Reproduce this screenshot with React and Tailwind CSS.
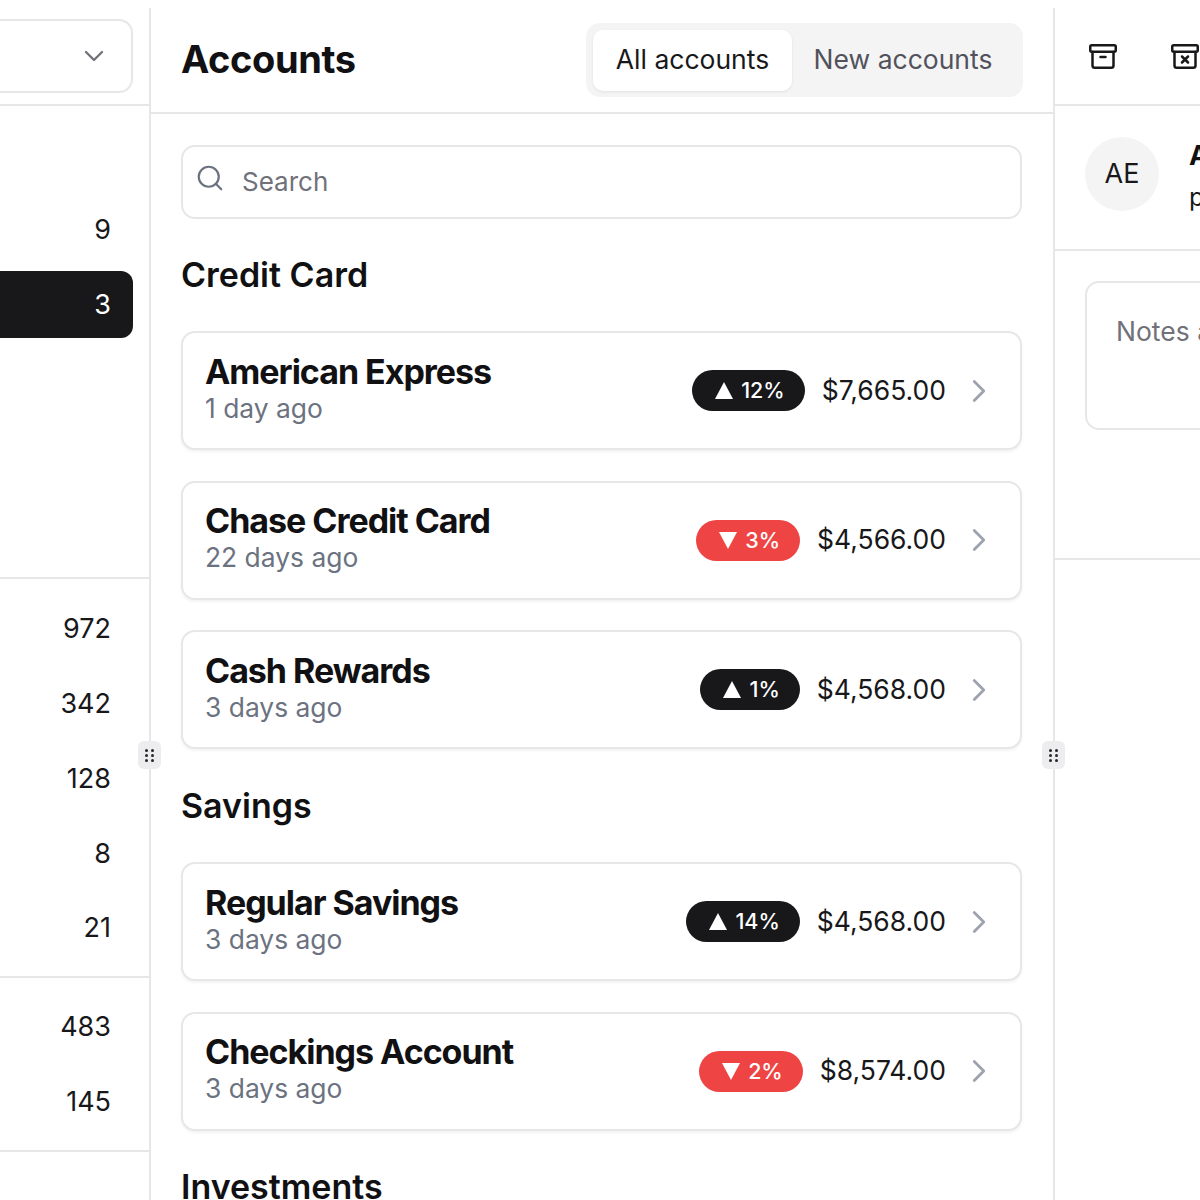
import React from "react";
import { ChevronDown, ChevronRight, Search } from "lucide-react";

const creditCards = [
  { name: "American Express", time: "1 day ago", pct: "12%", up: true, amount: "$7,665.00" },
  { name: "Chase Credit Card", time: "22 days ago", pct: "3%", up: false, amount: "$4,566.00" },
  { name: "Cash Rewards", time: "3 days ago", pct: "1%", up: true, amount: "$4,568.00" },
];

const savings = [
  { name: "Regular Savings", time: "3 days ago", pct: "14%", up: true, amount: "$4,568.00" },
  { name: "Checkings Account", time: "3 days ago", pct: "2%", up: false, amount: "$8,574.00" },
];

const NavRow = ({ value, active }) => (
  <div
    className={
      "flex h-[67px] items-center justify-end rounded-r-[12px] pt-[2px] pr-[22px] text-[27px] " +
      (active ? "bg-[#18181b] text-white" : "text-[#18181b]")
    }
  >
    {value}
  </div>
);

const Handle = ({ className }) => (
  <div
    className={
      "absolute top-[741px] z-10 grid h-[28px] w-[23px] grid-cols-2 content-center justify-center justify-items-center gap-x-[2px] gap-y-[2px] rounded-[6px] bg-[#ededef] px-[7px] " +
      className
    }
  >
    {[0, 1, 2, 3, 4, 5].map((i) => (
      <span key={i} className="h-[3px] w-[3px] rounded-full bg-[#27272a]" />
    ))}
  </div>
);

const BoxIcon = ({ cross }) => (
  <svg width="28" height="25" viewBox="0 0 28 25" fill="none" stroke="#18181b" strokeWidth="2.5" strokeLinecap="round" strokeLinejoin="round">
    <rect x="1.25" y="1.25" width="25.5" height="6.5" rx="1.5" />
    <path d="M3.5 8v13.5a2.25 2.25 0 0 0 2.25 2.25h16.5a2.25 2.25 0 0 0 2.25-2.25V8" />
    {cross ? <path d="M11 12.5l6 6M17 12.5l-6 6" /> : <path d="M11.5 13h5" />}
  </svg>
);

const Badge = ({ pct, up }) => (
  <div
    className={
      "flex h-[41px] items-center gap-[8px] rounded-full pr-[20px] pl-[23px] text-[21.5px] font-medium text-white " +
      (up ? "bg-[#18181b]" : "bg-[#ef4444]")
    }
  >
    <svg width="18" height="17" viewBox="0 0 18 17" fill="white">
      {up ? <polygon points="9,0 18,17 0,17" /> : <polygon points="0,0 18,0 9,17" />}
    </svg>
    {pct}
  </div>
);

const AccountCard = ({ item }) => (
  <div className="flex h-[119px] items-center rounded-[14px] border-2 border-[#e7e7e9] bg-white pr-[22px] pl-[22px] shadow-[0_2px_3px_rgba(0,0,0,0.05)]">
    <div className="flex-1 pb-[6px]">
      <div className="text-[34px] leading-[40px] font-bold tracking-[-0.03em] text-[#111113]">{item.name}</div>
      <div className="text-[26.4px] leading-[32px] text-[#6b7280]">{item.time}</div>
    </div>
    <Badge pct={item.pct} up={item.up} />
    <div className="ml-[17px] text-[26.5px] text-[#18181b]">{item.amount}</div>
    <ChevronRight size={38} strokeWidth={1.75} className="ml-[14px] text-[#9ca3af]" />
  </div>
);

export default function App() {
  return (
    <div className="relative flex h-[1200px] w-[1200px] overflow-hidden bg-white pt-[8px] font-['Inter',sans-serif]">
      {/* left nav */}
      <div className="flex w-[151px] shrink-0 flex-col border-r-2 border-[#e7e7e9]">
        <div className="flex h-[98px] shrink-0 items-center border-b-2 border-[#e7e7e9] pr-[16px]">
          <div className="ml-[-20px] flex h-[74px] flex-1 items-center justify-end rounded-[14px] border-2 border-[#e7e7e9] pr-[21px]">
            <ChevronDown size={32} strokeWidth={1.75} className="text-[#71717a]" />
          </div>
        </div>
        <div className="flex h-[473px] shrink-0 flex-col gap-[8px] border-b-2 border-[#e7e7e9] pt-[90px] pr-[16px]">
          <NavRow value="9" />
          <NavRow value="3" active />
        </div>
        <div className="flex h-[399px] shrink-0 flex-col gap-[7.75px] border-b-2 border-[#e7e7e9] pt-[16px] pr-[16px]">
          <NavRow value="972" />
          <NavRow value="342" />
          <NavRow value="128" />
          <NavRow value="8" />
          <NavRow value="21" />
        </div>
        <div className="flex h-[174px] shrink-0 flex-col gap-[7.75px] border-b-2 border-[#e7e7e9] pt-[15px] pr-[16px]">
          <NavRow value="483" />
          <NavRow value="145" />
        </div>
      </div>

      {/* accounts list */}
      <div className="flex w-[904px] shrink-0 flex-col border-r-2 border-[#e7e7e9]">
        <div className="flex h-[106px] shrink-0 items-center justify-between border-b-2 border-[#e7e7e9] pr-[30px] pl-[30px]">
          <h1 className="pb-[2px] text-[38px] font-bold tracking-[-0.01em] text-[#111113]">Accounts</h1>
          <div className="flex h-[74px] items-center rounded-[14px] bg-[#f4f4f5] px-[7px] text-[26.5px]">
            <div className="flex h-[61px] w-[199px] items-center justify-center rounded-[10px] bg-white text-[#18181b] shadow-[0_1px_3px_rgba(0,0,0,0.08)]">
              All accounts
            </div>
            <div className="flex h-[61px] w-[224px] items-center justify-center pr-[2px] text-[#52525b]">New accounts</div>
          </div>
        </div>
        <div className="flex flex-col pt-[31px] pr-[31px] pl-[30px]">
          <div className="flex h-[74px] shrink-0 items-center gap-[17px] rounded-[14px] border-2 border-[#e7e7e9] pl-[12px]">
            <Search size={30} strokeWidth={1.75} className="mb-[9px] text-[#6b7280]" />
            <span className="pb-[2px] text-[26px] text-[#71717a]">Search</span>
          </div>
          <h2 className="mt-[36px] mb-[36px] text-[34px] leading-[40px] font-semibold text-[#111113]">Credit Card</h2>
          <div className="flex flex-col gap-[30.5px]">
            {creditCards.map((item) => (
              <AccountCard key={item.name} item={item} />
            ))}
          </div>
          <h2 className="mt-[37px] mb-[36px] text-[34px] leading-[40px] font-semibold text-[#111113]">Savings</h2>
          <div className="flex flex-col gap-[30.5px]">
            {savings.map((item) => (
              <AccountCard key={item.name} item={item} />
            ))}
          </div>
          <h2 className="mt-[36px] text-[34px] leading-[40px] font-semibold text-[#111113]">Investments</h2>
        </div>
      </div>

      {/* detail pane */}
      <div className="flex w-[600px] shrink-0 flex-col">
        <div className="flex h-[98px] shrink-0 items-center gap-[54px] border-b-2 border-[#e7e7e9] pl-[34px]">
          <BoxIcon />
          <BoxIcon cross />
        </div>
        <div className="flex h-[145px] shrink-0 items-start gap-[30px] border-b-2 border-[#e7e7e9] pt-[31px] pl-[30px]">
          <div className="flex h-[74px] w-[74px] items-center justify-center rounded-full bg-[#f4f4f5] text-[27px] text-[#18181b]">
            AE
          </div>
          <div>
            <div className="text-[27px] leading-[38px] font-bold text-[#111113]">American Express</div>
            <div className="text-[25px] leading-[44px] text-[#18181b]">payments@americanexpress.com</div>
          </div>
        </div>
        <div className="h-[309px] shrink-0 border-b-2 border-[#e7e7e9] px-[30px] pt-[30px]">
          <div className="h-[149px] w-[500px] rounded-[14px] border-2 border-[#e7e7e9] px-[29px] pt-[29px] text-[26.5px] text-[#71717a]">
            Notes about this account
          </div>
        </div>
      </div>

      <Handle className="left-[138px]" />
      <Handle className="left-[1042px]" />
    </div>
  );
}
